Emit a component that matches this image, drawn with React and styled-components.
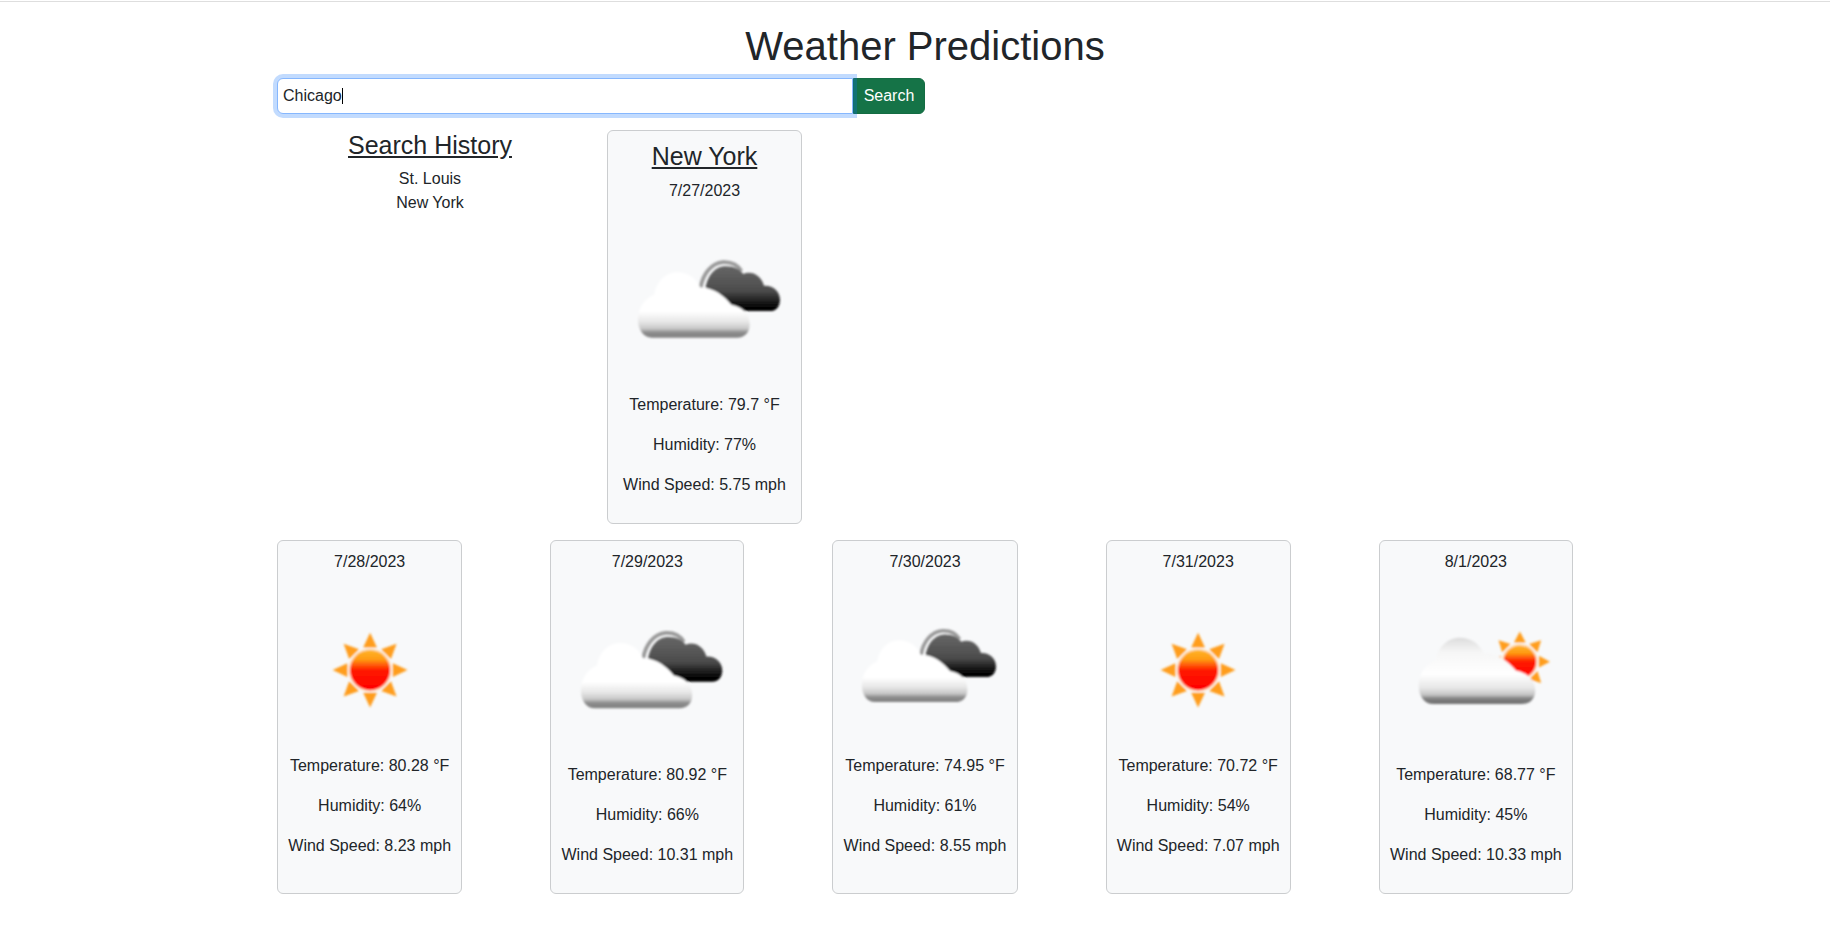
import React from "react";
import styled, { createGlobalStyle } from "styled-components";

const Global = createGlobalStyle`
  html, body { margin: 0; padding: 0; background: #fff; }
  body { font-family: "Liberation Sans", Arial, sans-serif; font-size: 16px; line-height: 24px; color: #212529; }
  * { box-sizing: border-box; }
`;

const TopRule = styled.div`
  height: 2px;
  border-bottom: 1px solid #dedede;
`;
const Container = styled.main`
  width: 1296px;
  margin-left: 277px;
  padding-top: 19.5px;
`;
const Title = styled.h1`
  margin: 0 0 8px;
  font-size: 40px;
  line-height: 48px;
  font-weight: 400;
  text-align: center;
`;
const SearchForm = styled.form`
  display: flex;
  width: 648px;
  height: 36px;
  margin-bottom: 16px;
`;
const InputWrap = styled.div`
  position: relative;
  z-index: 2;
  flex: 1;
  min-width: 0;
`;
const SearchInput = styled.input`
  display: block;
  width: 100%;
  height: 36px;
  padding: 0 5px;
  font: inherit;
  color: #212529;
  background: #fff;
  border: 1px solid #86b7fe;
  border-radius: 6px 0 0 6px;
  outline: 0;
  box-shadow: 0 0 0 4px rgba(13, 110, 253, 0.25);
`;
const Caret = styled.span`
  position: absolute;
  left: 64.5px;
  top: 10px;
  width: 1px;
  height: 16px;
  background: #000;
`;
const SearchButton = styled.button`
  width: 72px;
  height: 36px;
  padding: 0;
  font: inherit;
  color: #fff;
  background: #157347;
  border: 1px solid #146c43;
  border-radius: 0 6px 6px 0;
`;
const TopRow = styled.section`
  display: grid;
  grid-template-columns: 306px 195px;
  column-gap: 24px;
  margin-bottom: 16px;
`;
const HistoryColumn = styled.aside`
  text-align: center;
`;
const Heading = styled.h3`
  margin: 0 0 7px;
  font-size: 25px;
  line-height: 30px;
  font-weight: 400;
  text-decoration: underline;
`;
const CardHeading = styled(Heading)`
  padding-top: 1px;
  margin-bottom: 8px;
`;
const HistoryItem = styled.div`
  line-height: 24px;
`;
const Card = styled.article`
  display: flex;
  flex-direction: column;
  padding: 9.6px;
  text-align: center;
  background: #f8f9fa;
  border: 1px solid #cbcdcf;
  border-radius: 6px;
`;
const Para = styled.p`
  margin: 0 0 16px;
  padding: 0 0.7px;
  white-space: nowrap;
`;
const IconSvg = styled.svg`
  display: block;
  width: 100%;
  height: auto;
  aspect-ratio: 1;
`;
const Forecast = styled.section`
  display: flex;
  justify-content: space-between;
  align-items: stretch;
`;

const CLOUD =
  "M19.5 68.3 C14.5 68.3 11.5 63.5 11.5 58 C11.5 51 15.5 45.6 20.8 43.6 C22 36 27.4 30.6 34 30.6 C40.8 30.6 45.4 34.6 47.4 39.6 C54 39 61 43.8 65.2 49.4 C71.5 50.4 75.8 55 75.8 60.6 C75.8 65.2 73 68.3 68.5 68.3 Z";
const DARK =
  "M50 44 C50 35.5 54 28 60.8 27.2 C66.4 26.8 70 28.8 72 31.6 C77 29.6 82.4 32.4 84 38.4 C89 38 93.2 41.6 93.2 46.4 C93.2 50.6 90.8 53 87.4 53 L72 53 C66 53 60 48 50 44 Z";

const Gradients = () => (
  <defs>
    <filter id="soft" x="-10%" y="-10%" width="120%" height="120%">
      <feGaussianBlur stdDeviation="0.5" />
    </filter>
    <linearGradient id="cloudG" x1="0" y1="0" x2="0" y2="1">
      <stop offset="0" stopColor="#fff" />
      <stop offset="0.6" stopColor="#fff" />
      <stop offset="0.76" stopColor="#e6e6e6" />
      <stop offset="0.86" stopColor="#c8c8c8" />
      <stop offset="0.92" stopColor="#8c8c8c" />
      <stop offset="1" stopColor="#808080" />
    </linearGradient>
    <linearGradient id="cloudTop" x1="0" y1="0" x2="0" y2="1">
      <stop offset="0" stopColor="#dcdcdc" />
      <stop offset="0.22" stopColor="#f6f6f6" />
      <stop offset="0.55" stopColor="#fff" />
      <stop offset="0.76" stopColor="#e6e6e6" />
      <stop offset="0.86" stopColor="#c4c4c4" />
      <stop offset="0.92" stopColor="#7f7f7f" />
      <stop offset="1" stopColor="#707070" />
    </linearGradient>
    <linearGradient id="darkG" x1="0" y1="0" x2="0" y2="1">
      <stop offset="0" stopColor="#666" />
      <stop offset="0.55" stopColor="#4c4c4c" />
      <stop offset="0.88" stopColor="#080808" />
      <stop offset="1" stopColor="#000" />
    </linearGradient>
    <linearGradient id="discG" x1="0" y1="0" x2="0" y2="1">
      <stop offset="0" stopColor="#ffb52a" />
      <stop offset="0.24" stopColor="#ff9a12" />
      <stop offset="0.5" stopColor="#ff1a00" />
      <stop offset="1" stopColor="#ff0000" />
    </linearGradient>
  </defs>
);

const Sun = ({ cx, cy, r, rayIn, rayOut, half }) => (
  <g>
    {[0, 45, 90, 135, 180, 225, 270, 315].map((a) => (
      <polygon
        key={a}
        points={`${cx - half},${cy - rayIn} ${cx + half},${cy - rayIn} ${cx},${cy - rayOut}`}
        fill="#ff9d1e"
        transform={`rotate(${a} ${cx} ${cy})`}
      />
    ))}
    <circle cx={cx} cy={cy} r={r + 1} fill="#ffe2c2" />
    <circle cx={cx} cy={cy} r={r} fill="url(#discG)" />
  </g>
);

const ClearIcon = () => (
  <IconSvg width="100" height="100" viewBox="0 0 100 100">
    <Gradients />
    <g filter="url(#soft)">
      <Sun cx={50} cy={48.8} r={12.2} rayIn={13.8} rayOut={22.8} half={4.2} />
    </g>
  </IconSvg>
);

const NightCloudIcon = () => (
  <IconSvg width="100" height="100" viewBox="0 0 100 100">
    <Gradients />
    <g filter="url(#soft)">
      <path d="M47.5 39.5 C49 31 54 25.4 60.5 24.8 C65 24.6 69 26.6 71 30" fill="none" stroke="#999" strokeWidth="2.2" />
      <path d="M51.5 38 C52.5 33 55.5 29.4 60 28.2" fill="none" stroke="#eee" strokeWidth="1" />
      <path d={DARK} fill="url(#darkG)" />
      <path d={CLOUD} fill="url(#cloudG)" />
    </g>
  </IconSvg>
);

const SunCloudIcon = () => (
  <IconSvg width="100" height="100" viewBox="0 0 100 100">
    <Gradients />
    <g filter="url(#soft)">
      <Sun cx={75.6} cy={41.4} r={9.4} rayIn={11} rayOut={17.4} half={3.4} />
      <path d={CLOUD} fill="url(#cloudTop)" transform="translate(5.15 -3.5) scale(1.047 1.016)" />
    </g>
  </IconSvg>
);

const icons = { clear: ClearIcon, night: NightCloudIcon, sun: SunCloudIcon };

const WeatherCard = ({ heading, date, icon, temp, humidity, wind }) => {
  const Icon = icons[icon];
  return (
    <Card>
      {heading && <CardHeading>{heading}</CardHeading>}
      <Para>{date}</Para>
      <Icon />
      <Para>Temperature: {temp} °F</Para>
      <Para>Humidity: {humidity}%</Para>
      <Para>Wind Speed: {wind} mph</Para>
    </Card>
  );
};

const forecast = [
  { date: "7/28/2023", icon: "clear", temp: "80.28", humidity: 64, wind: "8.23" },
  { date: "7/29/2023", icon: "night", temp: "80.92", humidity: 66, wind: "10.31" },
  { date: "7/30/2023", icon: "night", temp: "74.95", humidity: 61, wind: "8.55" },
  { date: "7/31/2023", icon: "clear", temp: "70.72", humidity: 54, wind: "7.07" },
  { date: "8/1/2023", icon: "sun", temp: "68.77", humidity: 45, wind: "10.33" },
];

export default function App() {
  return (
    <>
      <Global />
      <TopRule />
      <Container>
        <Title>Weather Predictions</Title>
        <SearchForm onSubmit={(e) => e.preventDefault()}>
          <InputWrap>
            <SearchInput defaultValue="Chicago" />
            <Caret />
          </InputWrap>
          <SearchButton type="submit">Search</SearchButton>
        </SearchForm>
        <TopRow>
          <HistoryColumn>
            <Heading>Search History</Heading>
            <HistoryItem>St. Louis</HistoryItem>
            <HistoryItem>New York</HistoryItem>
          </HistoryColumn>
          <WeatherCard heading="New York" date="7/27/2023" icon="night" temp="79.7" humidity={77} wind="5.75" />
        </TopRow>
        <Forecast>
          {forecast.map((f) => (
            <WeatherCard key={f.date} {...f} />
          ))}
        </Forecast>
      </Container>
    </>
  );
}
